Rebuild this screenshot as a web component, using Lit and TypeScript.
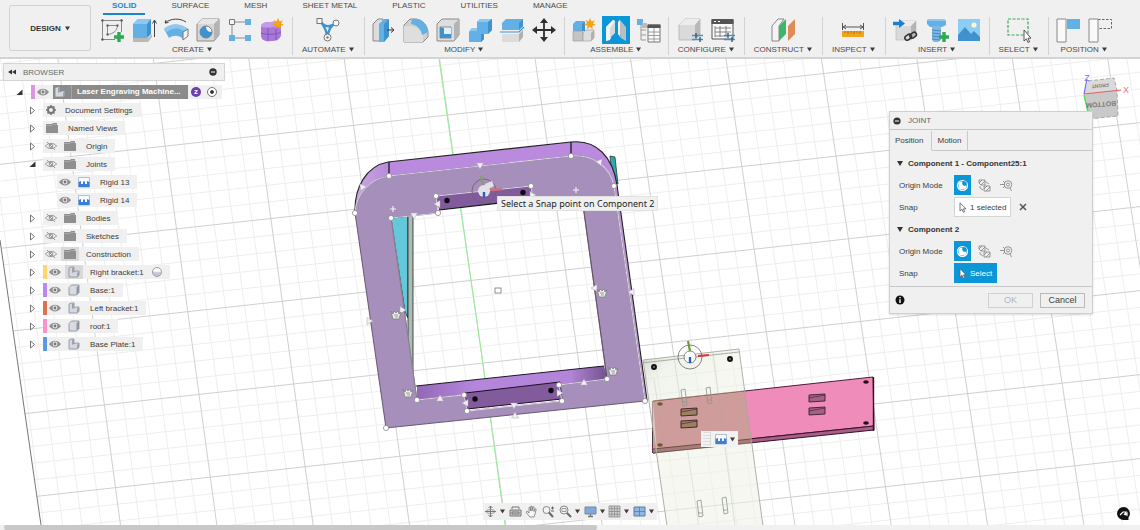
import { LitElement, html, svg, css, nothing } from "lit";
import { customElement } from "lit/decorators.js";
import { classMap } from "lit/directives/class-map.js";

const BLUE = "#62b0e6";
const DEEP = "#3f92cc";
const EDGE = "#8b8b8b";

const plus = (x: number, y: number) => svg`
  <path d="M${x} ${y - 5}V${y + 5}M${x - 5} ${y}H${x + 5}" stroke="#2fa84f" stroke-width="3.4" fill="none"/>`;

const star = (x: number, y: number) => svg`
  <path transform="translate(${x} ${y})" fill="#f5a30f"
    d="M0-6L1.6-2.6 5-3.8 3-0.8 6 1 2.4 1.8 2.6 5.4 0 2.8-3 5.2-2.4 1.6-6 1-3-1-4.6-4.2-1.4-2.6Z"/>`;

const ICONS: Record<string, unknown> = {
  sketch: svg`
    <g fill="none" stroke="#8a8a8a" stroke-width="1">
      <path d="M3.500 2V23.500M22.500 2V15M2 3.500H24M2 22.500H16"/>
      <path d="M8.500 17.500V8.500H18.500M18.500 8.500C18 14 14 17 8.500 17.500"/>
    </g>
    <path d="M2.500 2.500h2v2h-2zM21.500 2.500h2v2h-2zM2.500 21.500h2v2h-2zM7.500 7.500h2v2h-2zM17.500 7.500h2v2h-2zM7.500 16.500h2v2h-2z" fill="#555"/>
    ${plus(20, 20)}`,
  extrude: svg`
    <path d="M2 21L17 21 21 17V20L17 25H2Z" fill="#b9b9b9"/>
    <path d="M2 7L7 2H20L16 7V21H2Z" fill="${BLUE}"/>
    <path d="M2 7L7 2H20L16 7Z" fill="#8cc8f0"/>
    <path d="M16 7L20 2V17L16 21Z" fill="${DEEP}"/>
    <path d="M23.500 20V4M21.500 6.500L23.500 3l2 3.500" stroke="#444" fill="none"/>`,
  revolve: svg`
    <path d="M1 12C7 6 18 6 25 12L20 22C16 18 10 18 6 21Z" fill="${BLUE}"/>
    <path d="M1 12C7 6 18 6 25 12L21 14C15 10 9 11 4 15Z" fill="#8cc8f0"/>
    <path d="M25 12V19L20 23V15Z" fill="#f3f3f3" stroke="#777"/>
    <path d="M2 6C8 1 17 1 23 5M2 6l3.500-.5M2 6l1-3" stroke="#444" fill="none"/>`,
  hole: svg`
    <path d="M2 7L7 2H24V18L19 24H2Z" fill="#d6d6d6" stroke="${EDGE}"/>
    <path d="M2 7L7 2H24L19 7Z" fill="#e6e6e6"/>
    <path d="M19 7L24 2V18L19 24Z" fill="#b4b4b4"/>
    <circle cx="11" cy="15" r="6" fill="#f4f4f4" stroke="#777"/>
    <path d="M11 9A6 6 0 1 0 17 15C13 15 11 13 11 9Z" fill="${DEEP}"/>`,
  pattern: svg`
    <path d="M8 5H18M5 8V18M8 21H18" stroke="#8a8a8a" fill="none"/>
    <path d="M2.500 2.500h5v5h-5z" fill="#f4f4f4" stroke="#777"/>
    <path d="M18 2h6v6h-6zM18 18h6v6h-6zM2 18h6v6H2z" fill="${BLUE}"/>`,
  form: svg`
    <path d="M2 10C2 6 6 5 12 5 18 4 22 6 22 10V18C21 23 17 24 12 24 6 25 2 23 2 18Z" fill="#a877d8"/>
    <path d="M2 10C2 6 6 5 12 5 18 4 22 6 20 8 14 11 8 11 2 10Z" fill="#c49aea"/>
    <path d="M9 11V24M17 9V23M2 16C8 18 16 18 22 15" stroke="#7a4fb0" fill="none" stroke-width=".8"/>
    ${star(19, 7)}`,
  automate: svg`
    <path d="M5 4C10 10 12 14 12 20M21 6C15 9 13 14 13 20M5 4C9 10 15 11 21 6" stroke="${DEEP}" stroke-width="2.400" fill="none"/>
    <g fill="#f6f6f6" stroke="#777"><rect x="2" y="1.500" width="5" height="5"/><circle cx="21" cy="6" r="3"/>
    <circle cx="12.500" cy="20.500" r="3.500"/></g><circle cx="12.500" cy="20.500" r="1.200" fill="#777"/>`,
  press: svg`
    <path d="M2 7L7 2H12V24H2Z" fill="#dcdcdc" stroke="${EDGE}"/>
    <path d="M8 7L13 2H18V19L13 25H8Z" fill="${BLUE}"/>
    <path d="M13 7L18 2V19L13 25Z" fill="${DEEP}"/>
    <path d="M16 13H22M20 10.500l3 2.500-3 2.500" stroke="#333" fill="none"/>`,
  fillet: svg`
    <path d="M1 8L7 2H13C20 3 24 8 25 15V20L20 25H1Z" fill="#cfcfcf" stroke="${EDGE}"/>
    <path d="M1 9H8C15 10 19 14 20 19V25H1Z" fill="#dedede"/>
    <path d="M9 2H13C20 3 24 8 25 15L19 18C18 12 14 8 8 7Z" fill="${BLUE}"/>`,
  shell: svg`
    <path d="M2 7L7 2H24V18L19 24H2Z" fill="#dedede" stroke="${EDGE}"/>
    <path d="M19 7L24 2V18L19 24Z" fill="#b4b4b4"/>
    <path d="M5 10H16V21H5Z" fill="#fafafa" stroke="#888"/>
    <path d="M5 10L9 11V17H16V21H5Z" fill="${DEEP}"/><path d="M9 11H16V17H9Z" fill="#dff0fb"/>`,
  combine: svg`
    <path d="M2 15L5 11H10V5L13 2H25V13L21 17H17V22L14 25H2Z" fill="${BLUE}"/>
    <path d="M10 5L13 2H25L21 5ZM2 14L5 11H10V14Z" fill="#8cc8f0"/>
    <path d="M21 5L25 2V13L21 17ZM14 17H17V22L14 25Z" fill="${DEEP}"/>`,
  split: svg`
    <path d="M3 6L7 2H24V9L20 13H3Z" fill="${BLUE}"/><path d="M20 6L24 2V9L20 13Z" fill="${DEEP}"/>
    <path d="M1 15H20L25 10" stroke="${DEEP}" stroke-width="1.200" fill="none"/>
    <path d="M3 17H20L24 13V20L20 25H3Z" fill="#dcdcdc"/><path d="M20 17L24 13V20L20 25Z" fill="#b0b0b0"/>`,
  move: svg`
    <path d="M13 4V22M4 13H22" stroke="#2e2e2e" stroke-width="1.800"/>
    <path d="M13 1l4 5H9zM13 25l4-5H9zM1 13l5-4v8zM25 13l-5-4v8z" fill="#2e2e2e"/>`,
  component: svg`
    <path d="M2 7L5 4H13V14H2Z" fill="${BLUE}"/><path d="M11 7L14 4V14H11Z" fill="${DEEP}"/>
    <path d="M2 14H12V24H2Z" fill="#c4c4c4" stroke="#999" stroke-width=".6"/>
    <path d="M12 16L15 13H23V21L20 24H12Z" fill="#dedede" stroke="#999" stroke-width=".6"/>
    <path d="M20 16L23 13V21L20 24Z" fill="#b0b0b0"/>${star(19, 7)}`,
  joint: svg`
    <path d="M3 10L10 3C12 3 12.500 5 12 7V16L8 20V22L3 24Z" fill="#d3d8dc"/>
    <path d="M3 10L10 3 12 4 7 11V23L3 24Z" fill="#f2f4f5"/>
    <path d="M15 5L17 3 23 10V24L18 21V18L15 17Z" fill="#b9bec2"/>
    <path d="M15 5L17 3V17L18 21 15 17Z" fill="#f0f0f0"/>`,
  bom: svg`
    <path d="M2 2h6v6H2z" fill="${BLUE}"/><path d="M6 8V23H11M6 13H11M6 18H11" stroke="#999" fill="none"/>
    <path d="M7 6h5v5H7z" fill="#bbb"/>
    <path d="M13 8H25V25H13Z" fill="#fafafa" stroke="#777"/><path d="M12.500 7.500H25.500V11H12.500Z" fill="#555"/>
    <path d="M13 15H25M13 18.500H25M13 22H25M19 11V25" stroke="#888" stroke-width=".8"/>`,
  config: svg`
    <path d="M2 8L8 2H23V18L18 23H2Z" fill="#dadada" stroke="#aaa" stroke-width=".7"/>
    <path d="M2 8L8 2H23L18 8Z" fill="#ececec"/><path d="M18 8L23 2V18L18 23Z" fill="#b9b9b9"/>
    <path d="M15 18.500H26M15 22.500H26" stroke="${DEEP}" stroke-width="1.400"/>
    <path d="M19 16v5M23 20v5" stroke="#555" stroke-width="1.400"/>`,
  table: svg`
    <path d="M3 3H24V22H3Z" fill="#fafafa" stroke="#555"/><path d="M2.500 2H24.500V7H2.500Z" fill="#555"/>
    <path d="M5 4.500h2M9 4.500h2" stroke="#fff"/>
    <path d="M6 11H22M6 15H22M6 19H16M6 9V20M11 9V20M17 9V20" stroke="#777" stroke-width=".9"/>
    <path d="M15 18.500H26M15 22.500H26" stroke="${DEEP}" stroke-width="1.400"/>
    <path d="M19 16v5M23 20v5" stroke="#555" stroke-width="1.400"/>`,
  plane: svg`
    <path d="M2 9L8 2H14L9 9V24H2Z" fill="#f4f4f4" stroke="#888"/>
    <path d="M9 9L16 2V17L9 24Z" fill="#3fb56b"/><path d="M18 9L25 2V17L18 24Z" fill="#e08a55"/>`,
  measure: svg`
    <path d="M2.500 6V13M23.500 6V13M3 10H23M6 8l-3 2 3 2M20 8l3 2-3 2" stroke="#555" fill="none"/>
    <path d="M2 14H24V20H2Z" fill="#f0a31c"/><path d="M5 14v2M8 14v3M11 14v2M14 14v3M17 14v2M20 14v3" stroke="#9a6200" stroke-width=".8"/>`,
  derive: svg`
    <path d="M4 9L9 4H24V18L19 23H4Z" fill="#dadada" stroke="#bbb" stroke-width=".6"/>
    <path d="M4 9L9 4H24L19 9Z" fill="#ececec"/><path d="M19 9L24 4V18L19 23Z" fill="#b4b4b4"/>
    <path d="M1 4.800H7V2L13 6.500 7 11V8.200H1Z" fill="#1b7fd0"/>
    <g fill="none" stroke="#333" stroke-width="1.500"><rect x="12.500" y="18" width="7" height="4.500" rx="2.200" transform="rotate(-35 16 20)"/>
    <rect x="17.500" y="16" width="7" height="4.500" rx="2.200" transform="rotate(-35 21 18)"/></g>`,
  bolt: svg`
    <path d="M3 3L6 2H20L22 4V8L18 10H6L3 7Z" fill="${BLUE}"/><path d="M3 3L6 2H20L22 4H5Z" fill="#8cc8f0"/>
    <path d="M8 9H17V23L14 25H10L8 23Z" fill="#7db8e2"/><path d="M8 13l9 1M8 16l9 1M8 19l9 1M8 22l8 1" stroke="#4b88b8"/>
    ${plus(20, 20)}`,
  image: svg`
    <path d="M2 2H24V24H2Z" fill="#8ccdf5"/><path d="M2 18L9 10 15 17 18 14 24 20V24H2Z" fill="#3f92cc"/>
    <circle cx="18" cy="8" r="2.600" fill="#fff7d0"/>`,
  select: svg`
    <rect x="3" y="2" width="20" height="16" fill="none" stroke="#3aa757" stroke-width="1.200" stroke-dasharray="3 1.500"/>
    <path d="M19 13V24L21.400 21.800 23 25.500 24.600 24.800 23 21.200H26Z" fill="#fff" stroke="#444" stroke-width=".9"/>`,
  capture: svg`
    <path d="M12 2H25V12H12Z" fill="${BLUE}"/><path d="M2 2H11V25H2Z" fill="#fafafa" stroke="#888"/>`,
  revert: svg`
    <path d="M11 2.500H24.500V11.500H11" fill="none" stroke="#666" stroke-dasharray="2.500 1.500"/>
    <path d="M2 2H11V25H2Z" fill="#fafafa" stroke="#888"/>`,
};

const icon = (name: string) => html`<svg class="icon" viewBox="0 0 26 26" aria-hidden="true">${ICONS[name]}</svg>`;

const caret = html`<svg class="caret" viewBox="0 0 5 5" aria-hidden="true"><path d="M0 .5H5L2.500 4.500Z" fill="#3c3c3c"/></svg>`;

interface Group { label: string; icons: string[]; active?: string; }

const GROUPS: Group[] = [
  { label: "CREATE", icons: ["sketch", "extrude", "revolve", "hole", "pattern", "form"] },
  { label: "AUTOMATE", icons: ["automate"] },
  { label: "MODIFY", icons: ["press", "fillet", "shell", "combine", "split", "move"] },
  { label: "ASSEMBLE", icons: ["component", "joint", "bom"], active: "joint" },
  { label: "CONFIGURE", icons: ["config", "table"] },
  { label: "CONSTRUCT", icons: ["plane"] },
  { label: "INSPECT", icons: ["measure"] },
  { label: "INSERT", icons: ["derive", "bolt", "image"] },
  { label: "SELECT", icons: ["select"] },
  { label: "POSITION", icons: ["capture", "revert"] },
];

const TABS = ["SOLID", "SURFACE", "MESH", "SHEET METAL", "PLASTIC", "UTILITIES", "MANAGE"];

const shared = css`
  :host { font-family: "Liberation Sans", Arial, sans-serif; font-size: 8px; color: #3c3c3c; }
  * { box-sizing: border-box; }
  button { font: inherit; color: inherit; background: none; border: 0; padding: 0; margin: 0; display: flex; align-items: center; }
  svg { display: block; flex: none; }
  .caret { width: 5px; height: 5px; }
`;

@customElement("tool-bar")
export class ToolBar extends LitElement {
  static styles = [shared, css`
    :host { display: flex; background: #f0f0f0; height: 59px; border-bottom: 2px solid #d4d4d4; padding-left: 9px; }
    .workspace { width: 82px; height: 46px; margin-top: 5px; border: 1px solid #d2d2d2; border-radius: 3px; justify-content: center; gap: 4px; font-weight: bold; color: #333; }
    .main { flex: 1; min-width: 0; }
    .tabs { display: flex; gap: 17px; padding-left: 12px; height: 15px; }
    .tab { height: 15px; padding: 0 9px 2px; border-bottom: 2px solid transparent; color: #4a4a4a; }
    .tab.on { font-weight: bold; color: #1a87c9; border-color: #1a87c9; }
    .groups { display: flex; padding: 2px 0 0 2px; }
    .group { height: 38px; padding: 0 7px 0 6px; border-right: 1px solid #d2d2d2; display: flex; flex-direction: column; align-items: center; }
    .group:last-child { border-right: 0; }
    .icons { display: flex; gap: 6px; height: 27px; }
    .tool { height: 26px; }
    .tool.on { background: #0a96d7; box-shadow: 0 0 0 1px #0a96d7; }
    .icon { width: 26px; height: 26px; }
    .label { gap: 3px; height: 12px; padding: 0 3px; color: #4a4a4a; white-space: nowrap; }
  `];
  render() {
    return html`
      <button class="workspace">DESIGN ${caret}</button>
      <div class="main">
        <nav class="tabs">
          ${TABS.map((t, i) => html`<button class=${classMap({ tab: true, on: i === 0 })}>${t}</button>`)}
        </nav>
        <div class="groups">
          ${GROUPS.map((g) => html`
            <div class="group">
              <div class="icons">
                ${g.icons.map((n) => html`<button class=${classMap({ tool: true, on: g.active === n })} aria-label=${n}>${icon(n)}</button>`)}
              </div>
              <button class="label">${g.label} ${caret}</button>
            </div>`)}
        </div>
      </div>`;
  }
}

const eye = (on: boolean) => html`<svg class="eye" viewBox="0 0 12 10" aria-hidden="true">
  ${on
    ? svg`<path d="M0 5C3 .5 9 .5 12 5 9 9.500 3 9.500 0 5Z" fill="#909090"/><circle cx="6" cy="5" r="2.400" fill="#ededed"/><circle cx="6" cy="5" r="1.400" fill="#777"/>`
    : svg`<path d="M.5 5C3 1.500 9 1.500 11.500 5 9 8.500 3 8.500 .5 5ZM2 1L10 9" fill="none" stroke="#959595"/><circle cx="6" cy="5" r="1.800" fill="none" stroke="#959595"/>`}
</svg>`;

const GLYPHS: Record<string, unknown> = {
  gear: svg`<circle cx="6" cy="6" r="3" fill="none" stroke="#777" stroke-width="2"/>
    <path d="M6 1V3M6 9V11M1 6H3M9 6H11M2.500 2.500L4 4M8 8L9.500 9.500M9.500 2.500L8 4M4 8L2.500 9.500" stroke="#777" stroke-width="1.600"/>`,
  folder: svg`<path d="M1 2H7L8 1H12V3H13V11H1Z" fill="#8f8f8f"/><path d="M1 3.500H7L8 2.500H12" stroke="#b5b5b5" stroke-width=".7" fill="none"/>`,
  joint: svg`<path d="M1.500 1.500H12.500V11H1.500Z" fill="#f7f9fc" stroke="#9aa6b8" stroke-width=".7"/>
    <path d="M1.500 6L4 5V8H6V5.500H8V8H10V5L12.500 6V11H1.500Z" fill="#3b7fd6"/>`,
  bracket: svg`<path d="M2 2L4 1H7V6L8.500 5H12V9L10.500 11H2Z" fill="#d5d8de" stroke="#868c96" stroke-width=".8"/>
    <path d="M5 2L7 1V6L5 7ZM10 7L12 5V9L10 11Z" fill="#9aa2b0"/>`,
  body: svg`<path d="M2 3.500L4.500 1H12V8.500L9.500 11H2Z" fill="#d9dbe0" stroke="#868c96" stroke-width=".8"/>
    <path d="M9.500 3.500L12 1V8.500L9.500 11Z" fill="#8f96a3"/>`,
};

interface Node { text: string; icon: string; level: number; eye?: boolean; color?: string; open?: boolean; leaf?: boolean; hot?: boolean; ball?: boolean; }

const TREE: Node[] = [
  { text: "Document Settings", icon: "gear", level: 1 },
  { text: "Named Views", icon: "folder", level: 1 },
  { text: "Origin", icon: "folder", level: 1, eye: false },
  { text: "Joints", icon: "folder", level: 1, eye: false, open: true },
  { text: "Rigid 13", icon: "joint", level: 2, eye: true, leaf: true },
  { text: "Rigid 14", icon: "joint", level: 2, eye: true, leaf: true },
  { text: "Bodies", icon: "folder", level: 1, eye: false },
  { text: "Sketches", icon: "folder", level: 1, eye: false },
  { text: "Construction", icon: "folder", level: 1, eye: false, hot: true },
  { text: "Right bracket:1", icon: "bracket", level: 1, eye: true, color: "#ffd66e", hot: true, ball: true },
  { text: "Base:1", icon: "body", level: 1, eye: true, color: "#b98af0" },
  { text: "Left bracket:1", icon: "bracket", level: 1, eye: true, color: "#dc7350" },
  { text: "roof:1", icon: "body", level: 1, eye: true, color: "#f794cd" },
  { text: "Base Plate:1", icon: "bracket", level: 1, eye: true, color: "#5a9be0" },
];

const twisty = (open = false) => html`<button class="twisty" aria-label="Toggle"><svg width="7" height="9" viewBox="0 0 7 9">
  ${open ? svg`<path d="M6.500 1.500V7H.5Z" fill="#333"/>` : svg`<path d="M1.500 1L5.500 4.500 1.500 8Z" fill="#fff" stroke="#666" stroke-width=".9"/>`}</svg></button>`;

const glyph = (n: string) => html`<svg width="14" height="12" viewBox="0 0 14 12" aria-hidden="true">${GLYPHS[n]}</svg>`;

@customElement("browser-panel")
export class BrowserPanel extends LitElement {
  static styles = [shared, css`
    :host { display: block; width: 222px; }
    .head { display: flex; align-items: center; gap: 7px; height: 18px; padding: 0 7px 0 4px; background: #f0f0f0; border: 1px solid #d4d4d4; color: #6a6a6a; }
    .head span { flex: 1; }
    ul { list-style: none; margin: 2px 0 0; padding: 0; }
    li { display: flex; align-items: center; height: 18px; gap: 7px; padding-left: 26px; }
    li.l2 { padding-left: 54px; }
    li.root { padding-left: 13px; gap: 8px; }
    .twisty { width: 7px; height: 10px; }
    .pill { display: flex; align-items: center; height: 14px; background: #f0f0f0; padding-right: 8px; white-space: nowrap; }
    .root .pill { padding-right: 5px; }
    .bar { width: 4px; height: 14px; }
    .eye { width: 12px; height: 10px; margin: 0 2px; }
    .glyph { display: flex; align-items: center; height: 14px; padding: 0 2px; }
    .glyph.after { margin-left: 2px; }
    .glyph.hot { background: #d9d9d9; }
    .name { margin-left: 7px; }
    .name.near { margin-left: 4px; }
    .ball { width: 10px; height: 10px; margin-left: 8px; border-radius: 50%; border: 1px solid #9a9ea6; background: linear-gradient(#fafafa 40%, #c3c7d0 60%); }
    .title { display: flex; align-items: center; width: 135px; height: 14px; margin: 0 3px 0 2px; background: #8b8b8b; color: #fff; font-weight: bold; }
    .title b { margin-left: 4px; padding-left: 5px; border-left: 1px solid #a5a5a5; line-height: 14px; }
    .badge { width: 10px; height: 10px; border-radius: 50%; background: #6a3fae; color: #fff; font-weight: bold; line-height: 10px; text-align: center; }
    .radio { appearance: none; width: 10px; height: 10px; margin: 0 0 0 6px; border: 1px solid #6f7680; border-radius: 50%; background: radial-gradient(circle, #333 25%, #fff 40%); }
  `];
  render() {
    return html`
      <div class="head">
        <svg width="8" height="6" viewBox="0 0 8 6"><path d="M4 .5V5.500L0 3ZM8 .5V5.500L4 3Z" fill="#333"/></svg>
        <span>BROWSER</span>
        <svg width="8" height="8" viewBox="0 0 8 8"><circle cx="4" cy="4" r="3.700" fill="#333"/><path d="M2 4H6" stroke="#fff"/></svg>
      </div>
      <ul>
        <li class="root">${twisty(true)}
          <div class="pill">
            <i class="bar" style="background:#dc96e0"></i>${eye(true)}
            <span class="title">${glyph("bracket")}<b>Laser Engraving Machine...</b></span>
            <span class="badge">z</span>
            <input class="radio" type="radio" checked aria-label="Activate component">
          </div>
        </li>
        ${TREE.map((n) => html`
          <li class=${classMap({ l2: n.level === 2 })}>
            ${n.leaf ? nothing : twisty(n.open)}
            <div class="pill">
              ${n.color ? html`<i class="bar" style="background:${n.color}"></i>` : nothing}
              ${n.eye === undefined ? nothing : eye(n.eye)}
              <span class=${classMap({ glyph: true, hot: !!n.hot, after: n.eye !== undefined })}>${glyph(n.icon)}</span>
              <span class=${classMap({ name: true, near: n.icon === "gear" })}>${n.text}</span>
              ${n.ball ? html`<i class="ball"></i>` : nothing}
            </div>
          </li>`)}
      </ul>`;
  }
}

const cursor = (fill: string, stroke: string) => html`<svg width="8" height="11" viewBox="0 0 8 11" aria-hidden="true">
  <path d="M1 .8V9L3 7.200 4.400 10.300 5.700 9.700 4.400 6.800H7Z" fill=${fill} stroke=${stroke} stroke-width=".8"/></svg>`;

@customElement("joint-dialog")
export class JointDialog extends LitElement {
  static styles = [shared, css`
    :host { display: block; width: 204px; background: #f0f0f0; border: 1px solid #cfcfcf; box-shadow: 0 1px 2px #0002; }
    .head { display: flex; align-items: center; gap: 7px; height: 18px; padding-left: 3px; border-bottom: 1px solid #c9c9c9; color: #666; }
    .tabs { display: flex; height: 21px; padding-top: 1px; }
    .tab { padding: 0 6px 0 5px; border-right: 1px solid #c9c9c9; border-bottom: 1px solid #c9c9c9; }
    .tab.on { padding: 0 8px 0 5px; border-bottom-color: transparent; }
    .rest { flex: 1; border-bottom: 1px solid #c9c9c9; }
    .body { display: flex; flex-direction: column; gap: 2px; padding: 2px 9px 3px; border-bottom: 1px solid #c9c9c9; }
    h3 { display: flex; align-items: center; gap: 5px; height: 20px; margin: 0 0 0 -2px; font-size: 8px; color: #333; }
    .row { display: grid; grid-template-columns: 55px 1fr; align-items: center; height: 20px; }
    .set { display: flex; align-items: center; gap: 5px; }
    .mode { width: 17px; height: 20px; justify-content: center; }
    .mode.on { background: #0a96d7; }
    .pick { height: 20px; gap: 3px; padding: 0 4px; background: #fff; border: 1px solid #d4d4d4; }
    .pick.on { background: #0a96d7; border-color: #0a96d7; color: #fff; }
    .clear { margin-left: 3px; }
    .foot { display: flex; align-items: center; gap: 7px; height: 26px; padding: 0 7px 0 5px; }
    .foot i { flex: 1; }
    .foot button { width: 45px; height: 15px; justify-content: center; border: 1px solid #b9b9b9; font-size: 9px; }
    .foot button:disabled { color: #b4b4b4; border-color: #d0d0d0; }
  `];
  modes() {
    return html`
      <button class="mode on" aria-label="Simple"><svg width="13" height="13" viewBox="0 0 13 13">
        <circle cx="6.500" cy="6.500" r="5" fill="none" stroke="#fff" stroke-width="1.200"/><path d="M6.500 2.500A4 4 0 1 0 10.500 6.500C8 7 6 5 6.500 2.500Z" fill="#fff"/><circle cx="8.500" cy="4.500" r="2.200" fill="#0a96d7"/></svg></button>
      <button class="mode" aria-label="Between two faces"><svg width="13" height="13" viewBox="0 0 13 13" fill="none" stroke="#8a8a8a" stroke-width=".9">
        <path d="M1 1H7V6H3L1 4ZM1 4L4 1M3 6L7 2M6 7H12V12H6ZM6 10L9 7M8 12L12 8M2 7V9L5 11M8 3L11 5"/></svg></button>
      <button class="mode" aria-label="Two edge intersection"><svg width="13" height="13" viewBox="0 0 13 13" fill="none" stroke="#8a8a8a" stroke-width=".9">
        <circle cx="8" cy="5.500" r="3.800"/><circle cx="8" cy="5.500" r="1.500"/><path d="M0 5.500H5M10 9L11.500 12M3 2L5 4M3 9L5 7"/></svg></button>`;
  }
  heading(t: string) {
    return html`<h3><svg width="6" height="5" viewBox="0 0 6 5"><path d="M0 0H6L3 5Z" fill="#333"/></svg>${t}</h3>`;
  }
  render() {
    return html`
      <div class="head"><svg width="8" height="8" viewBox="0 0 8 8"><circle cx="4" cy="4" r="3.600" fill="#333"/><path d="M2 4H6" stroke="#fff"/></svg>JOINT</div>
      <div class="tabs"><button class="tab on">Position</button><button class="tab">Motion</button><span class="rest"></span></div>
      <div class="body">
        ${this.heading("Component 1 - Component25:1")}
        <div class="row"><span>Origin Mode</span><div class="set">${this.modes()}</div></div>
        <div class="row"><span>Snap</span><div class="set">
          <button class="pick">${cursor("#fff", "#555")}1 selected</button>
          <button class="clear" aria-label="Clear"><svg width="8" height="8" viewBox="0 0 8 8"><path d="M1 1L7 7M7 1L1 7" stroke="#555" stroke-width="1.500"/></svg></button>
        </div></div>
        ${this.heading("Component 2")}
        <div class="row"><span>Origin Mode</span><div class="set">${this.modes()}</div></div>
        <div class="row"><span>Snap</span><div class="set"><button class="pick on">${cursor("#fff", "#666")}Select</button></div></div>
      </div>
      <div class="foot">
        <svg width="10" height="10" viewBox="0 0 10 10"><circle cx="5" cy="5" r="4.500" fill="#111"/><path d="M5 2V3.300M5 4.200V8" stroke="#fff" stroke-width="1.400"/></svg>
        <i></i><button disabled>OK</button><button>Cancel</button>
      </div>`;
  }
}

const NAV: [string, boolean, unknown][] = [
  ["Orbit", true, svg`<path d="M6.500 1V12M1 6.500H12M4.500 3l2-2 2 2M4.500 10l2 2 2-2" stroke="#777" fill="none"/><ellipse cx="6.500" cy="6.500" rx="4.500" ry="2" fill="none" stroke="#888" stroke-width=".8"/>`],
  ["Look at", false, svg`<path d="M1 5H12V11H1Z" fill="#c6c9cd" stroke="#777"/><path d="M3 4V2H10V4M3 7H10V9H3Z" stroke="#777" fill="none"/>`],
  ["Pan", false, svg`<path d="M4 11L1 7 2.200 6.300 4 8V2.500L5.200 2.300 5.700 6V1.300H7V6L7.800 1.800 9 2V6.500L10 3.800 11.200 4.200 10 9 9 12H5Z" fill="#f6f6f6" stroke="#777" stroke-width=".8"/>`],
  ["Zoom", false, svg`<circle cx="4.500" cy="5" r="3.500" fill="#eef4f8" stroke="#888"/><path d="M7 7.500L11 12" stroke="#666" stroke-width="2"/><path d="M9 3H12M10.500 1.500V4.500M9 6H12" stroke="#555" stroke-width=".9"/>`],
  ["Fit", true, svg`<circle cx="5" cy="5" r="4" fill="#eef4f8" stroke="#888"/><path d="M3 3.500H7V6.500H3Z" fill="none" stroke="#888" stroke-width=".8"/><path d="M8 8L12 12" stroke="#666" stroke-width="2"/>`],
  ["Display", true, svg`<path d="M1 2H12V9H1Z" fill="#7ea9dc" stroke="#7b8794"/><path d="M4 11.500H9M6.500 9V11" stroke="#777" stroke-width="1.400"/>`],
  ["Grid", true, svg`<path d="M1 1H12V12H1Z" fill="#d2d2d2"/><path d="M1 1H12V12H1ZM1 3.750H12M1 6.500H12M1 9.250H12M3.750 1V12M6.500 1V12M9.250 1V12" fill="none" stroke="#8c8c8c" stroke-width=".8"/>`],
  ["Viewports", true, svg`<path d="M1 2H12V11H1Z" fill="#8fb6e4" stroke="#657a94"/><path d="M6.500 2V11M1 6.500H12" stroke="#657a94" stroke-width=".8"/>`],
];

@customElement("nav-bar")
export class NavBar extends LitElement {
  static styles = [shared, css`
    :host { display: flex; justify-content: space-between; align-items: center; width: 174px; height: 17px; padding: 0 3px 0 1px; background: #f0f0f0; }
    button { gap: 3px; }
  `];
  render() {
    return html`${NAV.map(([n, drop, g]) => html`<button aria-label=${n}><svg width="13" height="13" viewBox="0 0 13 13">${g}</svg>${drop ? caret : nothing}</button>`)}`;
  }
}

// Construction grid: every fifth line is a major one.
const gridLines = () => {
  const minor: unknown[] = [];
  const major: unknown[] = [];
  for (let k = -24; k <= 42; k++) {
    const x = 481 + 19.2 * k;
    const s = 0.142 + (x - 481) * 0.00002;
    (k % 5 === 0 ? major : minor).push(svg`<path d="M${x - 300 * s} 50L${x + 180 * s} 530"/>`);
  }
  for (let k = -6; k <= 34; k++) {
    const y = 164 + 16.8 * k;
    (k % 5 === 0 ? major : minor).push(svg`<path d="M-60 ${y + 7}L1200 ${y - 132}"/>`);
  }
  return svg`<g stroke="#eeeeee">${minor}</g><g stroke="#d0d0d0">${major}</g>`;
};

const DOTS = [[355, 213], [389, 176], [571, 156], [614, 186], [391, 218], [438, 213], [436, 196], [531, 186], [386, 428], [417, 400], [464, 395], [467, 411], [562, 401], [559, 385], [607, 379], [645, 401]];
const ARROWS: [number, number, number][] = [[480, 166, 180], [362, 188, 200], [600, 163, 160], [414, 216, 180], [437, 204, -90], [533, 195, 90], [370, 321, 90], [403, 310, 90], [594, 288, -90], [631, 292, -90], [440, 398, 0], [584, 382, 0], [514, 406, 180], [515, 415, 0], [465, 403, -90], [560, 393, 90]];
const CLAWS = [[396, 315], [602, 293], [613, 371], [408, 393]];

const slot = (x: number, y: number, fill: string) => svg`
  <path d="M${x} ${y + 1}L${x + 16} ${y}V${y + 7}L${x} ${y + 8}Z" fill=${fill} stroke="#3a1e2c" stroke-width=".9"/>
  <path d="M${x} ${y + 4}L${x + 16} ${y + 1}" stroke="#3a1e2c" stroke-width=".6"/>`;

const narrow = (x: number, y: number) => svg`
  <path d="M${x} ${y}L${x + 4} ${y - 1}L${x + 6} ${y + 15}L${x + 2} ${y + 16}ZM${x + 1} ${y + 12}H${x + 5}" fill="none" stroke="#8f958b" stroke-width=".8"/>`;

@customElement("model-canvas")
export class ModelCanvas extends LitElement {
  static styles = [shared, css`
    :host { display: block; }
    svg { width: 100%; height: 100%; }
    .cube { font-size: 7px; font-weight: bold; fill: #7c7c7c; text-anchor: middle; }
    .face { font-size: 5px; }
    .axis { font-size: 9px; font-weight: normal; }
    .z { fill: #7a7ae6; }
    .x { fill: #e67a7a; }
  `];
  render() {
    return html`<svg viewBox="0 59 1140 466" preserveAspectRatio="xMinYMin slice" role="img" aria-label="Model view">
      <defs>
        <linearGradient id="wall"><stop offset="0" stop-color="#9468b8"/><stop offset=".3" stop-color="#b586dc"/><stop offset=".8" stop-color="#b285d8"/><stop offset="1" stop-color="#70518c"/></linearGradient>
        <linearGradient id="rim"><stop offset="0" stop-color="#c8a8de"/><stop offset=".12" stop-color="#b98add"/><stop offset=".85" stop-color="#b98add"/><stop offset="1" stop-color="#bfa3d0"/></linearGradient>
        <linearGradient id="plate" x1="0" y1="0" x2=".3" y2=".4"><stop offset="0" stop-color="#b9bfba" stop-opacity=".7"/><stop offset=".4" stop-color="#e4eadb" stop-opacity=".5"/><stop offset="1" stop-color="#eef2e4" stop-opacity=".55"/></linearGradient>
        <clipPath id="floor"><path d="M-26 50L1200 50V530H41Z"/></clipPath>
      </defs>
      <rect y="50" width="1140" height="500" fill="#fff"/>
      <g clip-path="url(#floor)" stroke-width="1">${gridLines()}</g>
      <path d="M0 240L41 525" stroke="#777"/>
      <path d="M439 59L481 350 505 525" stroke="#93ef93" fill="none"/>

      <path d="M610 156L615 157 618 184 612 180Z" fill="#2fa8a8" stroke="#222" stroke-width=".7"/>
      <path d="M391 218L408 216V318L405 312Z" fill="#62c8da" stroke="#1f3a40"/>
      <path d="M408 216L413 215V386L408 345Z" fill="#a9bdb6" stroke="#222" stroke-width=".8"/>
      <path d="M417 386L604 366 608 380 560 388 465 398 417 402Z" fill="url(#wall)"/>
      <path d="M416 386L604 366" stroke="#1e1428"/>
      <path d="M355 213C354 188 366 166 388 162L571 142C597 139 613 158 617 185L647 400H640L600 180 389 176Z" fill="url(#rim)" stroke="#222" stroke-width="1.100"/>
      <path d="M389 162V176M571 142V156" stroke="#111" stroke-width="1.200"/>
      <path fill="#a68fba" fill-rule="evenodd" stroke="#4c4058" stroke-width=".8" d="M386 428L355 213C356 194 369 179 389 176L571 156C592 154 610 166 614 186L645 401Z
        M391 218L438 213 436 196 531 186 533 203 582 198 607 379 559 385 562 401 467 411 464 395 417 400Z"/>
      <path d="M355 213C356 194 369 179 389 176L571 156C592 154 610 166 614 186L645 401M391 218L417 400" stroke="#dcd4e2" stroke-width="1.100" fill="none"/>
      <path d="M391 218L417 400 M582 198L607 379" stroke="#5a5060" stroke-width=".7" fill="none"/>
      <path d="M436 196L531 186 534 199 439 210Z" fill="#815b9c"/><path d="M439 210L534 199" stroke="#111" stroke-width="1.200"/>
      <path d="M436 196L531 186" stroke="#ddd3e4"/>
      <path d="M465 393L560 382 562 399 467 409Z" fill="#815b9c" stroke="#1d1026"/>
      <path d="M417 400L464 395 467 411 562 401 559 385 607 379" fill="none" stroke="#ddd3e4" stroke-width="1.200"/>
      <path d="M391 218L438 213 436 196M531 186L533 199" fill="none" stroke="#ddd3e4"/>
      <g fill="#0c0810"><circle cx="447" cy="200.500" r="2.700"/><circle cx="523" cy="192.500" r="2.700"/><circle cx="475" cy="399" r="2.700"/><circle cx="551" cy="390.500" r="2.700"/></g>

      <path d="M653 401L873 377 874 426 653 449Z" fill="#f08cba" stroke="#4d1c36"/>
      <path d="M653 449L874 426V430L653 453Z" fill="#a65f88" stroke="#3a1028"/>
      <path d="M873.500 377V431M653 401V453" stroke="#3a1028" stroke-width="1.400"/>
      ${slot(809, 394, "#a65f88")}${slot(809, 407, "#a65f88")}
      <g fill="#220a16"><ellipse cx="866" cy="382" rx="2.800" ry="1.800"/><ellipse cx="866" cy="423" rx="2.800" ry="1.800"/></g>
      <path d="M653 401L744 391 751 439 751 443 653 453Z" fill="#cf9c9c"/>
      <path d="M653 449L751 439V443L653 453Z" fill="#a67c7c"/>
      <path d="M653 401L744 391M653 449L751 439M653 453L751 443" stroke="#6c5138" fill="none"/>
      ${slot(681, 408, "#9c8060")}${slot(681, 420, "#9c8060")}
      <g fill="#6c5c28"><ellipse cx="660" cy="404" rx="2.800" ry="1.800"/><ellipse cx="660" cy="445" rx="2.800" ry="1.800"/></g>
      <path d="M643 360L739 349 744 391 653 401 657 453 751 443 763 526H667Z" fill="url(#plate)"/>
      <path d="M667 526L643 360 739 349 763 526M642 363L739 352" fill="none" stroke="#a3a99e" stroke-width=".9"/>
      <path d="M654 379L663 440M713 352L735 526" stroke="#a3a99e" stroke-width=".6" opacity=".5"/>
      ${narrow(681, 390)}${narrow(706, 388)}${narrow(697, 501)}${narrow(722, 498)}
      <g fill="#777" stroke="#111" stroke-width="1.900"><circle cx="654" cy="367" r="2"/><circle cx="730" cy="359" r="2"/></g>

      <g fill="#fff" stroke="#8a8a8a" stroke-width=".8">
        ${DOTS.map(([x, y]) => svg`<circle cx=${x} cy=${y} r="2.600"/>`)}
      </g>
      <g fill="#f1eff4" stroke="#aaa3b2" stroke-width=".5">
        ${ARROWS.map(([x, y, r]) => svg`<path d="M-3.500 3H3.500L0-3Z" transform="translate(${x} ${y}) rotate(${r})"/>`)}
      </g>
      ${CLAWS.map(([x, y]) => svg`<g transform="translate(${x} ${y})" fill="#ececec" stroke="#777" stroke-width=".7">
        <path d="M-5-4L-3-1-2-4 0-2 2-4 3-1 5-3 3 4H-3Z"/><path d="M-2 0H2M-1 2H2"/></g>`)}
      <path d="M393 206V212M390 209H396M576 187V193M573 190H579" stroke="#f5f2f8" stroke-width="1.100"/>
      <rect x="495" y="288" width="6" height="5" fill="#fff" stroke="#777" stroke-width=".8"/>

      <circle cx="484" cy="191" r="12" fill="none" stroke="#6e6478" stroke-width=".9"/>
      <circle cx="484" cy="191" r="6" fill="#e4e0ea"/><path d="M485 184L492 181 494 186 486 190Z" fill="#e4e0ea"/>
      <path d="M481 176L483 185" stroke="#8c9a6c" stroke-width="2.400"/><path d="M490 190L502 189" stroke="#d4707c" stroke-width="2.400"/><path d="M484 192V198" stroke="#2363b0" stroke-width="2.400"/>
      <g fill="none" stroke="#777" stroke-width=".9"><circle cx="690" cy="357" r="12"/><circle cx="690" cy="357" r="6" fill="#fff"/></g>
      <path d="M688 341L690 351" stroke="#6a9a35" stroke-width="2.200"/><path d="M698 356L709 355" stroke="#dc3434" stroke-width="2.200"/><path d="M690 357V363" stroke="#2363b0" stroke-width="2.400"/>

      <g class="cube">
        <path d="M1088 81L1114 78 1117 90 1084 94Z" fill="#dadada"/>
        <path d="M1084 94L1117 90 1118 116 1089 119Z" fill="#c9c9c9"/>
        <path d="M1088 81L1114 78 1117 90 1118 116 1089 119" fill="none" stroke="#999" stroke-dasharray="4 2" stroke-width=".8"/>
        <path d="M1084 94L1087 79" stroke="#6a6ae6" stroke-width="1.200"/><path d="M1084 94L1121 90" stroke="#e06060" stroke-width="1.200"/><path d="M1084 95L1088 112" stroke="#50e050" stroke-width="1.400"/>
        <text class="face" transform="translate(1100 84) rotate(174)">FRONT</text>
        <text transform="translate(1101 102) rotate(176)">BOTTOM</text>
        <text class="axis z" x="1087" y="81">Z</text>
        <text class="axis x" x="1126" y="93">X</text>
      </g>
    </svg>`;
  }
}

@customElement("app-root")
export class AppRoot extends LitElement {
  static styles = [shared, css`
    :host { display: flex; flex-direction: column; height: 100vh; overflow: hidden; background: #fff; }
    .stage { position: relative; flex: 1; min-height: 0; overflow: hidden; }
    model-canvas { position: absolute; inset: 0; }
    browser-panel { position: absolute; left: 3px; top: 4px; }
    joint-dialog { position: absolute; right: 47px; top: 52px; }
    nav-bar { position: absolute; left: 50%; bottom: 5px; transform: translateX(-50%); }
    .tip { position: absolute; left: 497px; top: 137px; padding: 0 3px; height: 15px; line-height: 13px; background: #f0f0f0; border: 1px solid #e2e2e2; font-family: "Noto Sans", sans-serif; font-size: 9px; color: #222; white-space: nowrap; }
    .mini { position: absolute; left: 701px; top: 372px; display: flex; align-items: center; gap: 3px; width: 37px; height: 16px; padding-left: 2px; background: #f2f2f2; }
    .grip { width: 8px; height: 14px; border-right: 1px solid #d9d9d9; background: repeating-linear-gradient(#dedede 0 1px, transparent 1px 3px); }
    .mini button { gap: 2px; }
    .help { position: absolute; right: 10px; bottom: 5px; width: 13px; height: 13px; }
    .track { height: 5px; background: #f1f1f1; }
    .thumb { height: 100%; width: 52%; margin-left: 4px; border-radius: 2px; background: #c8c8c8; }
  `];
  render() {
    return html`
      <tool-bar></tool-bar>
      <main class="stage">
        <model-canvas></model-canvas>
        <browser-panel></browser-panel>
        <joint-dialog></joint-dialog>
        <div class="tip" role="tooltip">Select a Snap point on Component 2</div>
        <div class="mini"><i class="grip"></i><button aria-label="Joint type">${glyph("joint")}${caret}</button></div>
        <nav-bar></nav-bar>
        <button class="help" aria-label="Assistant"><svg width="13" height="13" viewBox="0 0 13 13"><path d="M6.500 0A6.500 6.500 0 1 0 6.500 13H11.500V10.500A6.500 6.500 0 0 0 6.500 0Z" fill="#111"/><path d="M3 8L6 5H9L7 8M8 8L10 6V9" stroke="#fff" fill="none" stroke-width="1.100"/></svg></button>
      </main>
      <div class="track"><div class="thumb"></div></div>`;
  }
}
